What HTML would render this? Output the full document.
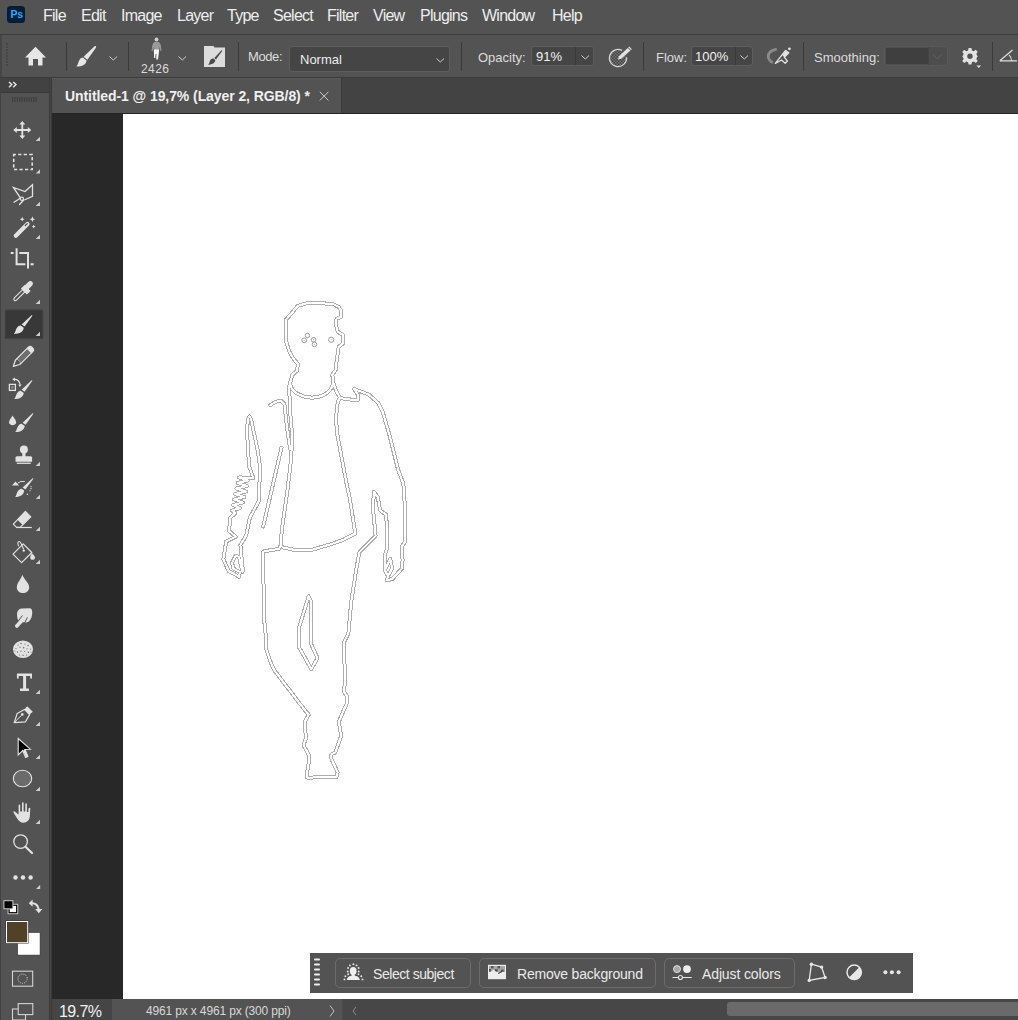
<!DOCTYPE html>
<html><head><meta charset="utf-8">
<style>
*{margin:0;padding:0;box-sizing:border-box}
html,body{width:1018px;height:1020px;overflow:hidden;background:#535353;font-family:"Liberation Sans",sans-serif;color:#e0e0e0}
.a{position:absolute}
#menubar{left:0;top:0;width:1018px;height:34px;background:#535353}
#menuline{left:0;top:34px;width:1018px;height:1px;background:#3d3d3d}
#opts{left:0;top:35px;width:1018px;height:42px;background:#535353}
#optsline{left:0;top:77px;width:1018px;height:1px;background:#3a3a3a}
.tb{font-size:14px;color:#eaeaea;line-height:16px;letter-spacing:-0.45px}
.menu{top:6px;font-size:16px;color:#eeeeee;line-height:19px;letter-spacing:-0.75px}
#panelhdr{left:0;top:78px;width:49px;height:14px;background:#424242;border-bottom:1px solid #393939;height:15px}
#toolbar{left:1px;top:93px;width:48px;height:927px;background:#535353}
#tbsep{left:49px;top:78px;width:3px;height:942px;background:#464646;border-left:1px solid #393939;border-right:1px solid #393939}
#tabbar{left:52px;top:78px;width:966px;height:35px;background:#434343}
#tab{left:52px;top:78px;width:289px;height:35px;background:#535353}
#paste{left:52px;top:113px;width:966px;height:886px;background:#282828}
#canvas{left:123px;top:114px;width:895px;height:885px;background:#ffffff}
#status{left:52px;top:999px;width:966px;height:21px;background:#535353}
#zoomfld{left:52px;top:999px;width:60px;height:21px;background:#454545}
</style></head><body>
<div class="a" id="menubar"></div>
<div class="a" id="menuline"></div>
<div class="a" id="opts"></div>
<div class="a" id="optsline"></div>
<div class="a" id="panelhdr"></div>
<div class="a" id="toolbar"></div>
<div class="a" id="tbsep"></div>
<div class="a" id="tabbar"></div>
<div class="a" id="tab"></div>
<div class="a" id="paste"></div>
<div class="a" id="canvas"></div>
<div class="a" id="status"></div>
<div class="a" id="zoomfld"></div>

<!-- menu -->
<div class="a" style="left:7px;top:6px;width:18px;height:17px;background:#001e36;border-radius:3.5px"></div>
<div class="a" style="left:10.6px;top:7.8px;font-size:10.5px;font-weight:bold;color:#31a8ff;line-height:12px;letter-spacing:-0.3px">Ps</div>
<div class="a menu" style="left:43px">File</div>
<div class="a menu" style="left:81px">Edit</div>
<div class="a menu" style="left:121px">Image</div>
<div class="a menu" style="left:177px">Layer</div>
<div class="a menu" style="left:227px">Type</div>
<div class="a menu" style="left:273px">Select</div>
<div class="a menu" style="left:327px">Filter</div>
<div class="a menu" style="left:373px">View</div>
<div class="a menu" style="left:420px">Plugins</div>
<div class="a menu" style="left:482px">Window</div>
<div class="a menu" style="left:552px">Help</div>


<!-- options bar -->
<div class="a" style="left:0;top:35px;width:2px;height:42px;background:#464646"></div>
<svg class="a" style="left:5px;top:43px" width="4" height="25"><g fill="#474747"><rect x="1" y="0" width="2" height="2"/><rect x="1" y="3" width="2" height="2"/><rect x="1" y="6" width="2" height="2"/><rect x="1" y="9" width="2" height="2"/><rect x="1" y="12" width="2" height="2"/><rect x="1" y="15" width="2" height="2"/><rect x="1" y="18" width="2" height="2"/><rect x="1" y="21" width="2" height="2"/></g></svg>
<svg class="a" style="left:24px;top:46px" width="23" height="20"><path d="M11.5 0.8 L22 11.5 L18.5 11.5 L18.5 19.5 L14 19.5 L14 13 L9 13 L9 19.5 L4.5 19.5 L4.5 11.5 L1 11.5 Z" fill="#e6e6e6"/></svg>
<div class="a" style="left:66px;top:42px;width:1px;height:29px;background:#3a3a3a"></div>
<svg class="a" style="left:75px;top:45px" width="22" height="22"><path d="M19.3 1.4 C20.6 0.6 21.6 1.5 20.9 2.7 L12.4 14.8 L8.6 11.8 Z" fill="#e6e6e6"/><path d="M7.8 12.6 L11.6 15.6 C11 19.8 7.5 21.6 1.4 21.6 C3.2 19.6 3.1 17.3 4.3 15.2 C5.2 13.6 6.3 12.8 7.8 12.6 Z" fill="#e6e6e6"/></svg>
<svg class="a" style="left:108px;top:54px" width="11" height="8"><path d="M1.5 2.5 L5.3 6 L9.1 2.5" fill="none" stroke="#d0d0d0" stroke-width="1"/></svg>
<div class="a" style="left:128px;top:42px;width:1px;height:29px;background:#3a3a3a"></div>
<svg class="a" style="left:150px;top:37px" width="14" height="24"><circle cx="6.5" cy="2.5" r="1.9" fill="#cfcfcf"/><path d="M4 5 L9 5 L10.8 8 L11.5 14 L10.5 14 L9.5 10 L9.2 13 L3.8 13 L3.6 10 L2.6 14 L1.6 14 L2.3 8 Z" fill="#9a9a9a"/><path d="M3.8 12.5 L9.2 12.5 L8.6 18 L8 22.5 L6.2 22.5 L6.4 17 L5.6 17 L5.3 21 L4 21 L4 17 Z" fill="#f5f5f5"/></svg>
<div class="a" style="left:141px;top:62px;font-size:12px;color:#dcdcdc;line-height:14px;letter-spacing:0.4px">2426</div>
<svg class="a" style="left:177px;top:54px" width="11" height="8"><path d="M1.5 2.5 L5.3 6 L9.1 2.5" fill="none" stroke="#d0d0d0" stroke-width="1"/></svg>
<svg class="a" style="left:203px;top:45px" width="23" height="23"><path d="M1 1 L10.5 1 L11.5 2.5 L22 2.5 L22 22 L1 22 Z" fill="#dcdcdc"/><path d="M18.5 5.3 C19 5 19.5 5.3 19.2 5.9 L13 14.6 L11.3 13 Z" fill="#4a4a4a"/><path d="M10.6 13.6 L12.4 15.3 C12 17.8 9.6 19.6 5.2 19.9 C6.5 18.5 6.4 17 7.1 15.5 C7.8 14.1 9.1 13.6 10.6 13.6 Z" fill="#4a4a4a"/></svg>
<div class="a" style="left:238px;top:42px;width:1px;height:29px;background:#3a3a3a"></div>
<div class="a" style="left:248px;top:48.5px;font-size:13px;color:#dcdcdc;line-height:15px;letter-spacing:-0.4px">Mode:</div>
<div class="a" style="left:289px;top:46px;width:161px;height:26px;background:#454545;border:1px solid #5e5e5e;border-radius:3px"></div>
<div class="a" style="left:300px;top:52px;font-size:13px;color:#ececec;line-height:15px">Normal</div>
<svg class="a" style="left:435px;top:56px" width="11" height="8"><path d="M1.5 2.5 L5.3 6 L9.1 2.5" fill="none" stroke="#d0d0d0" stroke-width="1"/></svg>
<div class="a" style="left:461px;top:42px;width:1px;height:29px;background:#3a3a3a"></div>
<div class="a" style="left:478px;top:50px;font-size:13px;color:#dcdcdc;line-height:15px">Opacity:</div>
<div class="a" style="left:531px;top:46px;width:63px;height:20px;background:#454545;border:1px solid #5e5e5e;border-radius:3px"></div>
<div class="a" style="left:575px;top:47px;width:1px;height:18px;background:#3a3a3a"></div>
<div class="a" style="left:536px;top:49px;font-size:13px;color:#f2f2f2;line-height:15px">91%</div>
<svg class="a" style="left:580px;top:53px" width="11" height="8"><path d="M1.5 2.5 L5.3 6 L9.1 2.5" fill="none" stroke="#d0d0d0" stroke-width="1"/></svg>
<div class="a" style="left:643px;top:42px;width:1px;height:29px;background:#3a3a3a"></div>
<div class="a" style="left:656px;top:50px;font-size:13px;color:#dcdcdc;line-height:15px">Flow:</div>
<div class="a" style="left:691px;top:46px;width:62px;height:20px;background:#454545;border:1px solid #5e5e5e;border-radius:3px"></div>
<div class="a" style="left:735px;top:47px;width:1px;height:18px;background:#3a3a3a"></div>
<div class="a" style="left:695px;top:49px;font-size:13px;color:#f2f2f2;line-height:15px">100%</div>
<svg class="a" style="left:739px;top:53px" width="11" height="8"><path d="M1.5 2.5 L5.3 6 L9.1 2.5" fill="none" stroke="#d0d0d0" stroke-width="1"/></svg>
<div class="a" style="left:803px;top:42px;width:1px;height:29px;background:#3a3a3a"></div>
<div class="a" style="left:814px;top:50px;font-size:13px;color:#dcdcdc;line-height:15px">Smoothing:</div>
<div class="a" style="left:884px;top:46px;width:64px;height:20px;background:#4d4d4d;border:1px solid #595959;border-radius:3px"></div>
<div class="a" style="left:886px;top:48px;width:42px;height:16px;background:#3f3f3f"></div>
<div class="a" style="left:928px;top:47px;width:1px;height:18px;background:#444"></div>
<svg class="a" style="left:932px;top:53px" width="11" height="8"><path d="M1 1.5 L5.3 5.8 L9.6 1.5" fill="none" stroke="#5a5a5a" stroke-width="1.1"/></svg>
<div class="a" style="left:992px;top:42px;width:1px;height:29px;background:#3a3a3a"></div>


<svg class="a" style="left:606px;top:44px" width="28" height="26"><defs><pattern id="chk" width="3" height="3" patternUnits="userSpaceOnUse"><rect width="3" height="3" fill="#424242"/><rect width="1.5" height="1.5" fill="#747474"/><rect x="1.5" y="1.5" width="1.5" height="1.5" fill="#747474"/></pattern></defs><circle cx="12" cy="14" r="8.0" fill="url(#chk)"/><path d="M16.04 6.41 A8.6 8.6 0 1 0 20.57 13.25" fill="none" stroke="#d6d6d6" stroke-width="1.3"/><path d="M11.90 15.60 L15.29 14.85 L25.79 5.19 L23.41 2.61 L12.92 12.28 Z" fill="#e2e2e2"/><path d="M24.61 6.27 L22.24 3.70" stroke="#3a3a3a" stroke-width="0.9"/></svg>
<svg class="a" style="left:764px;top:45px" width="28" height="24"><path d="M12.8 4.2 Q2.5 6.5 4.6 13.2 Q5.8 16.4 8.8 17.6" fill="none" stroke="#8a8a8a" stroke-width="2.8"/><path d="M11.3 18.4 L18.0 9.8 L21.6 5.4 L24.8 7.8 L20.4 12.4 L23.4 16.0 L21.2 18.3 L17.5 15.0 L13.6 17.2 Z" fill="none" stroke="#e2e2e2" stroke-width="1.3" stroke-linejoin="round"/><path d="M21.6 5.4 L24.8 7.8 L20.4 12.4 L18.2 10.0 Z" fill="#e2e2e2"/><circle cx="25.4" cy="3.8" r="1.4" fill="#e2e2e2"/></svg>
<svg class="a" style="left:960px;top:46px" width="22" height="23"><g transform="translate(10,10.2) scale(0.9)"><path d="M-1.6 -8.2 L1.6 -8.2 L2.1 -5.6 L4.3 -4.7 L6.4 -6.3 L8.6 -4 L7 -1.9 L7.9 0.4 L8.4 0.4 L8.4 1.6 L7.9 1.6 L7 3.9 L8.6 6 L6.4 8.3 L4.3 6.7 L2.1 7.6 L1.6 9.9 L-1.6 9.9 L-2.1 7.6 L-4.3 6.7 L-6.4 8.3 L-8.6 6 L-7 3.9 L-7.9 1.6 L-8.4 1.6 L-8.4 0.4 L-7.9 0.4 L-7 -1.9 L-8.6 -4 L-6.4 -6.3 L-4.3 -4.7 L-2.1 -5.6 Z" fill="#e2e2e2" transform="translate(0,-0.8)"/><circle cx="0" cy="0" r="3" fill="#535353"/></g><path d="M16.5 19.5 L21 19.5 L18.75 22 Z" fill="#e6e6e6"/></svg>
<svg class="a" style="left:999px;top:49px" width="19" height="14"><path d="M0.8 11.8 L18 11.8 M0.8 11.8 L13.5 1" fill="none" stroke="#e0e0e0" stroke-width="1.2"/><path d="M10 5.8 Q12.5 8 12.5 11.8" fill="none" stroke="#e0e0e0" stroke-width="1.1"/></svg>


<!-- toolbar icons -->
<div class="a" style="left:0;top:78px;width:1px;height:942px;background:#424242"></div>
<svg class="a" style="left:0;top:78px" width="49" height="942">
<g transform="translate(0,-78)">
<path d="M9 82 L11.8 84.6 L9 87.2 M13.2 82 L16 84.6 L13.2 87.2" fill="none" stroke="#e8e8e8" stroke-width="1.4"/>
<g fill="#404040"><rect x="12.00" y="97" width="1.3" height="5"/><rect x="14.35" y="97" width="1.3" height="5"/><rect x="16.70" y="97" width="1.3" height="5"/><rect x="19.05" y="97" width="1.3" height="5"/><rect x="21.40" y="97" width="1.3" height="5"/><rect x="23.75" y="97" width="1.3" height="5"/><rect x="26.10" y="97" width="1.3" height="5"/><rect x="28.45" y="97" width="1.3" height="5"/><rect x="30.80" y="97" width="1.3" height="5"/><rect x="33.15" y="97" width="1.3" height="5"/><rect x="35.50" y="97" width="1.3" height="5"/></g>
<!-- move -->
<path d="M22.3 121 L25.3 124.5 L23.2 124.5 L23.2 129.1 L27.8 129.1 L27.8 127 L31.3 130 L27.8 133 L27.8 130.9 L23.2 130.9 L23.2 135.5 L25.3 135.5 L22.3 139 L19.3 135.5 L21.4 135.5 L21.4 130.9 L16.8 130.9 L16.8 133 L13.3 130 L16.8 127 L16.8 129.1 L21.4 129.1 L21.4 124.5 L19.3 124.5 Z" fill="#e2e2e2"/>
<path d="M40 136.7 L40 141 L35.7 141 Z" fill="#cfcfcf"/>
<!-- marquee -->
<rect x="13.7" y="154.5" width="18.5" height="15" fill="none" stroke="#e2e2e2" stroke-width="1.6" stroke-dasharray="3.2 2.3" stroke-dashoffset="1"/>
<path d="M40 169.2 L40 173.5 L35.7 173.5 Z" fill="#cfcfcf"/>
<!-- lasso -->
<path d="M20.2 197.6 L13.4 187.4 L25 191.5 L32.5 184.8 L32.5 196.4 L24.3 200" fill="none" stroke="#e2e2e2" stroke-width="1.3" stroke-linejoin="miter"/>
<circle cx="21.9" cy="198.7" r="1.6" fill="none" stroke="#e2e2e2" stroke-width="1.2"/>
<path d="M14 202.2 L20.2 198.2 M19.5 204.5 L23.5 200.3" fill="none" stroke="#e2e2e2" stroke-width="1.3" stroke-linecap="round"/>
<path d="M40 201.7 L40 206 L35.7 206 Z" fill="#cfcfcf"/>
<!-- magic wand -->
<path d="M15.8 235.8 L27.5 224" stroke="#e2e2e2" stroke-width="4.2" stroke-linecap="round"/>
<path d="M25.3 225.5 L27.3 223.6" stroke="#535353" stroke-width="1.3" stroke-linecap="round"/>
<path d="M22.2 216.8 L22.9 218.5 L24.6 219.2 L22.9 219.9 L22.2 221.6 L21.5 219.9 L19.8 219.2 L21.5 218.5 Z" fill="#e2e2e2"/>
<path d="M32.4 216.3 L33.2 218.4 L35.3 219.2 L33.2 220 L32.4 222.1 L31.6 220 L29.5 219.2 L31.6 218.4 Z" fill="#e2e2e2"/>
<path d="M33.7 224.6 L34.3 226 L35.7 226.6 L34.3 227.2 L33.7 228.6 L33.1 227.2 L31.7 226.6 L33.1 226 Z" fill="#e2e2e2"/>
<path d="M40 234.7 L40 239 L35.7 239 Z" fill="#cfcfcf"/>
<!-- crop -->
<path d="M16.6 248.2 L16.6 264.2 L25.4 264.2 M19.3 253 L28 253 L28 268.6 M10.7 253 L13.6 253 M30.5 264.2 L33.7 264.2" fill="none" stroke="#e2e2e2" stroke-width="2"/>
<!-- eyedropper -->
<path d="M14.5 300.5 C13.5 299.5 13.8 298.5 14.6 297.7 L22.6 289.7 L24.8 291.9 L16.8 299.9 C16 300.7 15.3 301.2 14.5 300.5 Z" fill="none" stroke="#e2e2e2" stroke-width="1.1"/>
<path d="M20.9 288.6 L24.6 284.9 L30.6 290.9 L26.9 294.6 Z" fill="#e2e2e2"/>
<path d="M24.2 286 L28.3 281.9 C29.5 280.7 31.3 280.8 32.2 281.8 C33.2 282.8 33.2 284.5 32 285.7 L27.9 289.8 Z" fill="#e2e2e2"/>
<path d="M40 299.7 L40 304 L35.7 304 Z" fill="#cfcfcf"/>
<!-- selected brush bg -->
<rect x="5" y="309.8" width="38" height="29" rx="1.5" fill="#383838" stroke="#4a4a4a" stroke-width="0.8"/>
<path d="M31.6 315.2 C32.2 314.9 32.5 315.3 32.2 315.9 L24.6 326.6 L21.6 324.6 Z" fill="#e2e2e2"/>
<path d="M20.6 325.6 L23.8 327.8 C23.3 331.6 20 334 13.9 334 C15.6 332.3 15.4 330.2 16.6 328.3 C17.5 326.8 19 325.8 20.6 325.6 Z" fill="#e2e2e2"/>
<path d="M40 331.7 L40 336 L35.7 336 Z" fill="#cfcfcf"/>
<!-- pencil -->
<path d="M13.3 366.4 L15.4 360.2 L28.4 347.2 C29.4 346.2 30.8 346.2 31.8 347.2 L32.7 348.1 C33.7 349.1 33.7 350.5 32.7 351.5 L19.7 364.5 Z" fill="none" stroke="#e2e2e2" stroke-width="1.3" stroke-linejoin="round"/>
<path d="M28.4 347.2 C29.4 346.2 30.8 346.2 31.8 347.2 L32.7 348.1 C33.7 349.1 33.7 350.5 32.7 351.5 L31 353.2 L26.7 348.9 Z" fill="#e2e2e2"/>
<path d="M17.4 358.5 L21.7 362.8" stroke="#e2e2e2" stroke-width="1.2"/>
<path d="M27.2 349.6 L17.6 359.2 L21 362.6 L30.6 353 Z" fill="#6e6e6e"/>
<!-- mixer brush -->
<rect x="9.4" y="384.4" width="6" height="6" fill="none" stroke="#e2e2e2" stroke-width="1.3"/>
<rect x="11.2" y="386.2" width="2.4" height="2.4" fill="#8a8a8a"/>
<path d="M14 379.5 Q19 379 20 384.5" fill="none" stroke="#e2e2e2" stroke-width="1.2"/>
<path d="M12.2 379.2 L15 377.4 L15 381.2 Z M18.2 384.6 L21.6 384.6 L19.9 387 Z" fill="#e2e2e2"/>
<path d="M31.6 380.3 C32.2 380 32.5 380.4 32.2 381 L24.6 391.7 L21.6 389.7 Z" fill="#e2e2e2"/>
<path d="M20.6 390.7 L23.8 392.9 C23.3 396.7 20 399 14.2 399 C15.9 397.3 15.7 395.3 16.9 393.4 C17.8 391.9 19 390.9 20.6 390.7 Z" fill="#e2e2e2"/>
<!-- healing brush -->
<path d="M12.6 415.5 C13.4 417.5 16.2 419.8 16.2 422.3 C16.2 424 14.6 425.2 12.6 425.2 C10.6 425.2 9 424 9 422.3 C9 419.8 11.8 417.5 12.6 415.5 Z" fill="#e2e2e2"/>
<path d="M32.6 413.3 C33.2 413 33.5 413.4 33.2 414 L25.6 424.7 L22.6 422.7 Z" fill="#e2e2e2"/>
<path d="M21.6 423.7 L24.8 425.9 C24.3 429.7 21 432 15.2 432 C16.9 430.3 16.7 428.3 17.9 426.4 C18.8 424.9 20 423.9 21.6 423.7 Z" fill="#e2e2e2"/>
<!-- stamp -->
<circle cx="23.9" cy="449.4" r="4" fill="#e2e2e2"/>
<rect x="22.3" y="452" width="3.2" height="5" fill="#e2e2e2"/>
<path d="M15.5 457.6 Q15.5 456.4 17 456.3 L30.6 456.3 Q32.1 456.4 32.1 457.6 L32.1 461.7 L15.5 461.7 Z" fill="#e2e2e2"/>
<rect x="16.8" y="462.6" width="14" height="1.3" fill="#e2e2e2"/>
<path d="M40 461.7 L40 466 L35.7 466 Z" fill="#cfcfcf"/>
<!-- history brush -->
<path d="M12 485.6 L15.5 481.4 L19 485.6 Z" fill="#e2e2e2"/>
<path d="M17.6 483.2 Q20.5 480.5 24.8 481.5" fill="none" stroke="#e2e2e2" stroke-width="1"/>
<path d="M32.6 478.3 C33.2 478 33.5 478.4 33.2 479 L25.4 489.4 L22.6 487.6 Z" fill="#e2e2e2"/>
<path d="M21.6 488.7 L24.2 490.5 C23.8 494.7 20.5 497 15.2 497 C16.6 495.3 16.5 493.3 17.6 491.5 C18.6 490 20 489 21.6 488.7 Z" fill="#e2e2e2"/>
<g fill="#e2e2e2"><circle cx="31" cy="486.6" r="0.7"/><circle cx="31" cy="488.5" r="0.7"/><circle cx="30" cy="490.6" r="0.7"/><circle cx="27.4" cy="494.3" r="0.8"/></g>
<path d="M40 494.7 L40 499 L35.7 499 Z" fill="#cfcfcf"/>
<!-- eraser -->
<path d="M25.4 511.4 L30.8 516.8 L20.2 527.4 L16.6 527.4 L13.3 524.1 Z" fill="none" stroke="#e2e2e2" stroke-width="1.2" stroke-linejoin="round"/>
<path d="M25.4 511.4 L30.8 516.8 L22.6 525 L17.2 519.6 Z" fill="#e2e2e2"/>
<path d="M16.6 527.5 L31.8 527.5" stroke="#e2e2e2" stroke-width="1.2"/>
<path d="M40 526.7 L40 531 L35.7 531 Z" fill="#cfcfcf"/>
<!-- bucket -->
<path d="M13 554.1 L23.2 543.9 L31.8 552.5 L21.6 562.7 Z" fill="none" stroke="#e2e2e2" stroke-width="1.2" stroke-linejoin="round"/>
<path d="M18.8 546.2 C17.2 543.5 17.8 541.5 19.2 541.5 C20.4 541.5 21.3 543 23.6 549.5" fill="none" stroke="#e2e2e2" stroke-width="1.1"/>
<circle cx="23.8" cy="550.6" r="1.2" fill="#e2e2e2"/>
<path d="M31.8 553 C33.2 554.8 35 556 35 557.5 C35 558.9 33.9 559.8 32.6 559.8 C31.2 559.8 30.2 558.9 30.2 557.5 C30.2 556 31.3 554.8 31.8 553 Z" fill="#e2e2e2"/>
<path d="M40 559.7 L40 564 L35.7 564 Z" fill="#cfcfcf"/>
<!-- blur drop -->
<path d="M22.4 574.8 C23.6 578.8 29.2 583.2 29.2 587.2 C29.2 590.8 26.2 593.1 23 593.1 C19.8 593.1 16.8 590.8 16.8 587.2 C16.8 583.2 21.2 578.8 22.4 574.8 Z" fill="#e2e2e2"/>
<!-- smudge -->
<path d="M21.5 608.4 L30 608.3 C31.6 608.5 32.2 610 32.2 612.5 C32.2 617 30.5 621.5 26.5 622.6 L20 622 C18 620.5 17 618.5 17 614.5 C17 610.8 18.8 608.6 21.5 608.4 Z" fill="#e2e2e2"/>
<path d="M16.8 626 L25.5 616.5" stroke="#e2e2e2" stroke-width="3.6" stroke-linecap="round"/>
<path d="M18.6 620.6 L22.2 615.8 M24.8 622.6 L27.2 617.8" stroke="#535353" stroke-width="1" stroke-linecap="round"/>
<!-- sponge -->
<ellipse cx="23" cy="649.2" rx="10" ry="8.8" fill="#e2e2e2"/>
<g fill="#6a6a6a">
<circle cx="18" cy="645" r="0.6"/><circle cx="21" cy="643.5" r="0.7"/><circle cx="25" cy="644" r="0.6"/><circle cx="28" cy="645.5" r="0.7"/><circle cx="16" cy="648.5" r="0.6"/><circle cx="20" cy="647.2" r="0.6"/><circle cx="23.6" cy="647.8" r="0.8"/><circle cx="27" cy="648.8" r="0.6"/><circle cx="30.5" cy="649" r="0.6"/><circle cx="17.5" cy="652" r="0.7"/><circle cx="21" cy="651.2" r="0.6"/><circle cx="24.7" cy="651.5" r="0.6"/><circle cx="28.4" cy="652.3" r="0.7"/><circle cx="19.5" cy="655" r="0.6"/><circle cx="23" cy="655.2" r="0.7"/><circle cx="26.5" cy="655" r="0.6"/><circle cx="15" cy="651" r="0.5"/><circle cx="31" cy="652" r="0.5"/>
</g>
<!-- type -->
<path d="M16.9 673.4 L32 673.4 L32 678.4 L30.2 678.4 L30.2 676 L26.1 676 L26.1 688.6 L28.9 688.6 L28.9 691.1 L20 691.1 L20 688.6 L23.1 688.6 L23.1 676 L18.7 676 L18.7 678.4 L16.9 678.4 Z" fill="#e2e2e2"/>
<path d="M40 689.7 L40 694 L35.7 694 Z" fill="#cfcfcf"/>
<!-- pen -->
<path d="M14.2 722.6 L17.2 713.5 L24.4 709.4 L29.6 714.6 L25.5 721.8 Z" fill="none" stroke="#e2e2e2" stroke-width="1.2" stroke-linejoin="round"/>
<path d="M24.4 709.4 L27.2 706.2 L32.8 711.8 L29.6 714.6 Z" fill="#e2e2e2"/>
<path d="M14.6 722.2 L21.8 715" stroke="#e2e2e2" stroke-width="1"/>
<circle cx="22.3" cy="714.4" r="1.3" fill="#e2e2e2"/>
<path d="M40 721.7 L40 726 L35.7 726 Z" fill="#cfcfcf"/>
<!-- path selection -->
<path d="M18.2 738.5 L30.3 749.2 L24.8 749.4 L27.8 756.4 L25.6 757.4 L22.7 750.5 L18.2 755 Z" fill="#000" stroke="#e2e2e2" stroke-width="1.1" stroke-linejoin="miter"/>
<path d="M24.2 750 L27.2 757" stroke="#e2e2e2" stroke-width="2.6"/>
<path d="M40 754.7 L40 759 L35.7 759 Z" fill="#cfcfcf"/>
<!-- ellipse -->
<ellipse cx="22.5" cy="778.5" rx="9.2" ry="8.2" fill="#6b6b6b" stroke="#e2e2e2" stroke-width="1.1"/>
<path d="M40 786.7 L40 791 L35.7 791 Z" fill="#cfcfcf"/>
<!-- hand -->
<path d="M13.5 812.5 C13 811.8 13.8 811 14.6 811.4 L18.6 814.6 L18.6 805.2 C18.6 804.2 20.2 804.2 20.2 805.2 L20.2 811.5 L22 811.5 L22 803 C22 802 23.6 802 23.6 803 L23.6 811.5 L25.3 811.5 L25.3 804 C25.3 803 26.9 803 26.9 804 L26.9 812 L28.3 812 L28.5 808.5 C28.6 807.4 30.4 807.4 30.3 808.5 L29.8 816.5 C29.4 820.5 26.5 822.7 23.5 822.7 C20.5 822.7 18.8 821.2 17.2 818.5 Z" fill="#e2e2e2"/>
<path d="M40 819.7 L40 824 L35.7 824 Z" fill="#cfcfcf"/>
<!-- zoom -->
<circle cx="20.6" cy="841.6" r="6.8" fill="none" stroke="#e2e2e2" stroke-width="1.3"/>
<path d="M25.5 846.7 L32 853" stroke="#e2e2e2" stroke-width="2.2" stroke-linecap="round"/>
<!-- more -->
<circle cx="15.5" cy="877.5" r="2.2" fill="#e2e2e2"/><circle cx="23" cy="877.5" r="2.2" fill="#e2e2e2"/><circle cx="30.6" cy="877.5" r="2.2" fill="#e2e2e2"/>
<path d="M40.2 884.8 L40.2 889 L36 889 Z" fill="#cfcfcf"/>
<!-- default colors -->
<rect x="7.6" y="903.8" width="10.6" height="10.4" fill="#d8d8d8"/>
<rect x="8.5" y="904.7" width="8.8" height="8.6" fill="#000"/>
<rect x="9.7" y="905.9" width="6.4" height="6.2" fill="#fff"/>
<rect x="3.5" y="900.3" width="9.8" height="8.9" fill="#d8d8d8"/>
<rect x="4.4" y="901.2" width="8" height="7.1" fill="#000"/>
<!-- swap -->
<path d="M31 903.2 Q37.5 902.5 38.8 909.5" fill="none" stroke="#e2e2e2" stroke-width="2"/>
<path d="M28.8 903.2 L32.6 899.6 L32.6 906.8 Z M35.2 909 L42.4 909 L38.8 913.3 Z" fill="#e2e2e2"/>
<!-- bg color -->
<rect x="17.6" y="932.5" width="22.5" height="22.6" fill="#fff" stroke="#2e2e2e" stroke-width="0.6"/>
<!-- fg color -->
<rect x="5.6" y="920.6" width="23" height="23" fill="#2a2a2a"/>
<rect x="6.5" y="921.5" width="21.2" height="21.2" fill="#504229" stroke="#fff" stroke-width="1"/>
<!-- quick mask -->
<rect x="12.5" y="971.2" width="20.2" height="15" fill="none" stroke="#d4d4d4" stroke-width="1.1"/>
<circle cx="22.6" cy="978.7" r="4.6" fill="none" stroke="#d4d4d4" stroke-width="1" stroke-dasharray="1 1.2"/>
<!-- screen mode -->
<rect x="12.5" y="1009" width="13" height="11" fill="none" stroke="#d4d4d4" stroke-width="1.1"/>
<rect x="18.2" y="1003.6" width="14.6" height="11" fill="#535353" stroke="#d4d4d4" stroke-width="1.1"/>
</g>
</svg>


<!-- tab details -->
<div class="a" style="left:52px;top:78px;width:289px;height:1px;background:#5a5a5a"></div>
<div class="a" style="left:341px;top:78px;width:1px;height:35px;background:#3a3a3a"></div>
<div class="a" style="left:52px;top:113px;width:966px;height:1px;background:#262626"></div>
<svg class="a" style="left:319px;top:91px" width="11" height="11"><path d="M0.8 0.8 L9.4 9.4 M9.4 0.8 L0.8 9.4" stroke="#c8c8c8" stroke-width="1"/></svg>
<!-- status details -->
<svg class="a" style="left:328px;top:1004px" width="8" height="14"><path d="M2 1.5 L6 7 L2 12.5" fill="none" stroke="#c0c0c0" stroke-width="1"/></svg>
<div class="a" style="left:342px;top:999px;width:1px;height:21px;background:#4a4a4a"></div>
<div class="a" style="left:343px;top:999px;width:675px;height:21px;background:#474747"></div>
<svg class="a" style="left:350px;top:1004px" width="8" height="14"><path d="M6 3 L3 7 L6 11" fill="none" stroke="#8a8a8a" stroke-width="1"/></svg>
<div class="a" style="left:727px;top:1002px;width:300px;height:14px;background:#6a6a6a;border-radius:3px"></div>

<!-- figure -->
<svg class="a" style="left:123px;top:114px" width="895" height="885">
<g transform="translate(-123,-114)" fill="none" stroke-linejoin="round" stroke-linecap="round" shape-rendering="crispEdges">
<path d="M289.1 386.7 L292.4 374.8 L297.2 370.5 L297.8 364.0 L293.4 358.6 L289.1 351.1 L285.9 340.3 L285.9 319.8 L292.4 312.3 L297.8 305.8 L307.5 303.1 L315.0 302.6 L333.4 304.2 L338.7 306.9 L341.4 311.2 L341.4 316.6 L336.6 318.7 L335.5 323.0 L337.7 331.7 L343.0 334.9 L343.0 343.5 L338.7 346.8 L337.1 357.6 L335.5 370.5 L332.3 374.8 L333.5 383.6 L336.2 391.2 L340.0 397.7 L343.7 398.7 L357.8 400.4 L358.3 395.0 L354.0 389.0 L368.5 394.4 L378.3 403.0 L382.6 411.7 L389.0 433.3 L398.2 470.0 L403.1 483.0 L404.2 490.8 L404.7 507.0 L405.3 523.1 L404.7 542.5 L401.5 546.8 L402.6 559.7 L402.0 568.4 L392.3 579.1 L387.0 580.2 M340.0 397.7 L337.8 401.5 L336.2 416.0 L336.7 431.1 L346.4 482.9 L350.0 499.4 L355.3 533.5 L342.9 540.0 L330.0 544.5 L312.7 549.6 L296.2 550.3 L283.0 547.5 L281.1 545.5 M289.1 386.7 L290.3 413.5 L292.3 437.0 L291.0 460.0 L287.5 490.0 L284.0 515.0 L282.0 528.0 L280.5 546.0 L279.1 548.8 L264.4 551.2 L262.5 552.4 L263.0 567.5 L264.0 600.0 L264.0 622.0 L265.0 624.5 L266.5 650.0 L270.1 660.9 L274.1 670.0 L304.7 710.0 L308.8 714.7 L304.7 721.8 L305.9 738.2 L303.5 745.3 L309.4 755.9 L308.2 766.5 L306.5 775.9 L307.1 777.6 L336.5 777.1 L337.6 772.4 L330.6 757.0 L331.8 754.1 L335.3 752.4 L341.2 735.9 L338.8 721.8 L347.0 702.9 L347.0 695.9 L343.5 691.2 L345.3 681.8 L345.0 670.0 L344.3 660.9 L344.3 641.6 L348.4 633.4 L351.2 601.8 L356.6 567.5 L359.5 552.0 L362.0 549.5 L375.6 536.0 L372.9 507.0 L374.0 491.9 L377.8 497.2 L380.0 510.2 L385.9 514.5 L387.0 525.3 L387.5 546.8 L384.8 555.4 L384.8 570.5 L388.0 575.9 L387.0 580.2 M384.8 570.5 L390.2 558.7 L392.3 568.4 L388.0 575.9 M270.3 405.3 L275.0 402.0 L280.9 400.6 L284.4 404.1 L286.8 425.3 L290.0 448.8 M281.5 447.6 L263.2 526.5 M253.3 478.0 L250.5 470.0 L249.1 466.5 L247.5 440.0 L246.8 432.4 L248.0 419.0 L249.5 416.5 L251.0 419.0 L257.4 448.8 L259.8 465.0 L259.2 500.3 L249.8 518.0 L246.2 535.6 L240.4 545.0 L241.5 556.8 L242.7 568.5 L242.5 572.0 M253.3 478.0 L239.2 477.4 L247.5 480.5 L237.5 483.0 L247.0 486.0 L236.5 488.5 L246.0 491.5 L235.0 494.0 L244.5 497.0 L234.0 499.5 L243.0 502.5 L233.0 505.0 L240.0 508.0 L232.0 510.5 L235.5 513.0 L230.0 518.0 L229.2 530.9 L235.6 536.8 L226.2 541.5 L223.3 559.1 L228.6 570.9 L239.2 576.8 L239.8 572.0 L233.3 568.5 L232.1 562.6 L235.6 555.6 L239.0 557.0 L242.5 572.0 M290.5 385.5 C294 399, 327 405, 333.5 383 M308.6 596.3 L299 627.9 L299 647.1 L311.3 669.1 L317.5 658.1 L311.3 644.4 L310.6 600.4 Z" stroke="#adadad" stroke-width="4"/>
<path d="M289.1 386.7 L292.4 374.8 L297.2 370.5 L297.8 364.0 L293.4 358.6 L289.1 351.1 L285.9 340.3 L285.9 319.8 L292.4 312.3 L297.8 305.8 L307.5 303.1 L315.0 302.6 L333.4 304.2 L338.7 306.9 L341.4 311.2 L341.4 316.6 L336.6 318.7 L335.5 323.0 L337.7 331.7 L343.0 334.9 L343.0 343.5 L338.7 346.8 L337.1 357.6 L335.5 370.5 L332.3 374.8 L333.5 383.6 L336.2 391.2 L340.0 397.7 L343.7 398.7 L357.8 400.4 L358.3 395.0 L354.0 389.0 L368.5 394.4 L378.3 403.0 L382.6 411.7 L389.0 433.3 L398.2 470.0 L403.1 483.0 L404.2 490.8 L404.7 507.0 L405.3 523.1 L404.7 542.5 L401.5 546.8 L402.6 559.7 L402.0 568.4 L392.3 579.1 L387.0 580.2 M340.0 397.7 L337.8 401.5 L336.2 416.0 L336.7 431.1 L346.4 482.9 L350.0 499.4 L355.3 533.5 L342.9 540.0 L330.0 544.5 L312.7 549.6 L296.2 550.3 L283.0 547.5 L281.1 545.5 M289.1 386.7 L290.3 413.5 L292.3 437.0 L291.0 460.0 L287.5 490.0 L284.0 515.0 L282.0 528.0 L280.5 546.0 L279.1 548.8 L264.4 551.2 L262.5 552.4 L263.0 567.5 L264.0 600.0 L264.0 622.0 L265.0 624.5 L266.5 650.0 L270.1 660.9 L274.1 670.0 L304.7 710.0 L308.8 714.7 L304.7 721.8 L305.9 738.2 L303.5 745.3 L309.4 755.9 L308.2 766.5 L306.5 775.9 L307.1 777.6 L336.5 777.1 L337.6 772.4 L330.6 757.0 L331.8 754.1 L335.3 752.4 L341.2 735.9 L338.8 721.8 L347.0 702.9 L347.0 695.9 L343.5 691.2 L345.3 681.8 L345.0 670.0 L344.3 660.9 L344.3 641.6 L348.4 633.4 L351.2 601.8 L356.6 567.5 L359.5 552.0 L362.0 549.5 L375.6 536.0 L372.9 507.0 L374.0 491.9 L377.8 497.2 L380.0 510.2 L385.9 514.5 L387.0 525.3 L387.5 546.8 L384.8 555.4 L384.8 570.5 L388.0 575.9 L387.0 580.2 M384.8 570.5 L390.2 558.7 L392.3 568.4 L388.0 575.9 M270.3 405.3 L275.0 402.0 L280.9 400.6 L284.4 404.1 L286.8 425.3 L290.0 448.8 M281.5 447.6 L263.2 526.5 M253.3 478.0 L250.5 470.0 L249.1 466.5 L247.5 440.0 L246.8 432.4 L248.0 419.0 L249.5 416.5 L251.0 419.0 L257.4 448.8 L259.8 465.0 L259.2 500.3 L249.8 518.0 L246.2 535.6 L240.4 545.0 L241.5 556.8 L242.7 568.5 L242.5 572.0 M253.3 478.0 L239.2 477.4 L247.5 480.5 L237.5 483.0 L247.0 486.0 L236.5 488.5 L246.0 491.5 L235.0 494.0 L244.5 497.0 L234.0 499.5 L243.0 502.5 L233.0 505.0 L240.0 508.0 L232.0 510.5 L235.5 513.0 L230.0 518.0 L229.2 530.9 L235.6 536.8 L226.2 541.5 L223.3 559.1 L228.6 570.9 L239.2 576.8 L239.8 572.0 L233.3 568.5 L232.1 562.6 L235.6 555.6 L239.0 557.0 L242.5 572.0 M290.5 385.5 C294 399, 327 405, 333.5 383 M308.6 596.3 L299 627.9 L299 647.1 L311.3 669.1 L317.5 658.1 L311.3 644.4 L310.6 600.4 Z" stroke="#ffffff" stroke-width="2"/>

</g><g transform="translate(-123,-114)" fill="none"><g stroke="#9c9c9c" stroke-width="1"><circle cx="304.2" cy="340.3" r="2.4"/><circle cx="307.5" cy="335.5" r="2.2"/><circle cx="313.6" cy="339.8" r="2.3"/><circle cx="314.5" cy="344.4" r="2.3"/><circle cx="331.2" cy="339.8" r="2.6"/></g>
<g fill="#999"><circle cx="304.2" cy="340.3" r="0.5"/><circle cx="313.6" cy="339.8" r="0.5"/><circle cx="314.5" cy="344.8" r="0.5"/><circle cx="331.2" cy="339.8" r="0.5"/></g></g></svg>

<!-- task bar -->
<div class="a" style="left:310px;top:953px;width:603px;height:40px;background:#535353"></div>
<svg class="a" style="left:313px;top:957px" width="10" height="32"><g fill="#f0f0f0"><rect x="1" y="1.5" width="6" height="2" rx="1"/><rect x="1" y="6.5" width="6" height="2" rx="1"/><rect x="1" y="11.5" width="6" height="2" rx="1"/><rect x="1" y="16.5" width="6" height="2" rx="1"/><rect x="1" y="21.5" width="6" height="2" rx="1"/><rect x="1" y="26.5" width="6" height="2" rx="1"/></g></svg>
<div class="a" style="left:335px;top:958px;width:136px;height:30px;border:1px solid #6c6c6c;border-radius:5px"></div>
<div class="a" style="left:479px;top:958px;width:177px;height:30px;border:1px solid #6c6c6c;border-radius:5px"></div>
<div class="a" style="left:664px;top:958px;width:131px;height:30px;border:1px solid #6c6c6c;border-radius:5px"></div>
<div class="a tb" style="left:373px;top:966px">Select subject</div>
<div class="a tb" style="left:517px;top:966px;letter-spacing:-0.2px">Remove background</div>
<div class="a tb" style="left:702px;top:966px;letter-spacing:-0.12px">Adjust colors</div>
<svg class="a" style="left:338px;top:958px" width="30" height="28"><g fill="#e6e6e6"><circle cx="15.41" cy="6.29" r="0.95"/><circle cx="11.95" cy="7.39" r="0.95"/><circle cx="18.55" cy="7.39" r="0.95"/><circle cx="10.06" cy="10.06" r="0.95"/><circle cx="20.60" cy="10.06" r="0.95"/><circle cx="9.75" cy="13.52" r="0.95"/><circle cx="20.75" cy="13.52" r="0.95"/><circle cx="10.22" cy="16.19" r="0.95"/><circle cx="20.44" cy="16.19" r="0.95"/><circle cx="7.39" cy="18.24" r="0.95"/><circle cx="23.27" cy="18.24" r="0.95"/><circle cx="6.45" cy="21.38" r="0.95"/><circle cx="24.53" cy="21.38" r="0.95"/></g><ellipse cx="15.2" cy="13" rx="3.4" ry="4.1" fill="#efefef"/><path d="M8.8 22 C9 19 11 17.6 15.2 17.4 C19.4 17.6 21.5 19 21.8 22 Z" fill="#efefef"/><rect x="13.6" y="15.5" width="3.2" height="3" fill="#efefef"/></svg>
<svg class="a" style="left:487px;top:964px" width="21" height="16"><rect x="1" y="0.8" width="18" height="14.4" fill="#ededed"/><g fill="#a8a8a8"><rect x="2" y="2" width="16" height="6"/></g><g fill="#4a4a4a" opacity="0.85"><rect x="4" y="2" width="2.6" height="2.4"/><rect x="10.5" y="2" width="2.6" height="2.4"/><rect x="2" y="5" width="2" height="2.6"/><rect x="8" y="5" width="2.6" height="2.6"/><rect x="14" y="5.5" width="2.6" height="2.4"/></g><path d="M1.5 9.5 L6.4 5.8 L11.8 10 L15.5 7.6 L18.5 10 L18.5 14.8 L1.5 14.8 Z" fill="#ededed"/><path d="M11.2 9.6 L15.4 7.2" stroke="#3e3e3e" stroke-width="1.1"/></svg>
<svg class="a" style="left:671px;top:964px" width="22" height="17"><circle cx="6" cy="5.1" r="3.5" fill="#a8a8a8" stroke="#e8e8e8" stroke-width="0.9"/><circle cx="16" cy="5.1" r="3.9" fill="#ededed"/><path d="M2 13.5 L20.3 13.5" stroke="#e8e8e8" stroke-width="1.2" stroke-linecap="round"/><circle cx="9.4" cy="13.5" r="2" fill="#535353" stroke="#e8e8e8" stroke-width="1.1"/></svg>
<svg class="a" style="left:806px;top:962px" width="22" height="21"><path d="M5.4 2.2 L15.6 5.1 L19.1 15.5 L3.2 18.4 Z" fill="none" stroke="#e8e8e8" stroke-width="1.3"/><g fill="#e8e8e8"><circle cx="5.4" cy="2.2" r="1.7"/><circle cx="15.6" cy="5.1" r="1.7"/><circle cx="19.1" cy="15.5" r="1.7"/><circle cx="3.2" cy="18.4" r="1.7"/></g></svg>
<svg class="a" style="left:845px;top:964px" width="19" height="17"><circle cx="9.2" cy="8.3" r="7.2" fill="none" stroke="#e8e8e8" stroke-width="1.5"/><path d="M14.3 3.2 A7.2 7.2 0 0 1 4.1 13.4 Z" fill="#e8e8e8"/></svg>
<svg class="a" style="left:881px;top:969px" width="22" height="7"><g fill="#e8e8e8"><circle cx="4.4" cy="3.3" r="2"/><circle cx="10.9" cy="3.3" r="2"/><circle cx="17.6" cy="3.3" r="2"/></g></svg>

<!-- tab -->
<div class="a" style="left:65px;top:88px;font-size:14px;font-weight:bold;color:#f0f0f0;line-height:16px;letter-spacing:-0.08px">Untitled-1 @ 19,7% (Layer 2, RGB/8) *</div>

<!-- status -->
<div class="a" style="left:59px;top:1002.5px;font-size:16px;color:#f0f0f0;line-height:18px;letter-spacing:-0.6px">19.7%</div>
<div class="a" style="left:146px;top:1004px;font-size:12px;color:#d8d8d8;line-height:14px;letter-spacing:-0.15px">4961 px x 4961 px (300 ppi)</div>
</body></html>
